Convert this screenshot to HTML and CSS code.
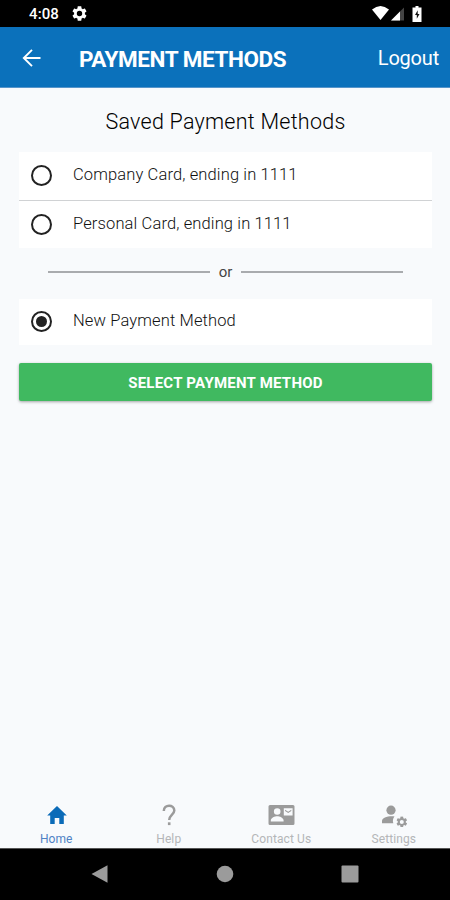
FILE: index.html
```html
<!DOCTYPE html>
<html lang="en">
<head>
<meta charset="utf-8">
<title>Payment Methods</title>
<link rel="stylesheet" href="styles.css">
</head>
<body>
<svg class="defs" width="0" height="0">
  <symbol id="gear" viewBox="2 2 20 20"><path fill-rule="evenodd" d="M19.14 12.94c.04-.3.06-.61.06-.94s-.02-.64-.07-.94l2.03-1.58c.18-.14.23-.41.12-.61l-1.92-3.32c-.12-.22-.37-.29-.59-.22l-2.39.96c-.5-.38-1.03-.7-1.62-.94l-.36-2.54c-.04-.24-.24-.41-.48-.41h-3.84c-.24 0-.43.17-.47.41l-.36 2.54c-.59.24-1.13.57-1.62.94l-2.39-.96c-.22-.08-.47 0-.59.22L2.74 8.87c-.12.21-.08.47.12.61l2.03 1.58c-.05.3-.09.63-.09.94s.02.64.07.94l-2.03 1.58c-.18.14-.23.41-.12.61l1.92 3.32c.12.22.37.29.59.22l2.39-.96c.5.38 1.03.7 1.62.94l.36 2.54c.05.24.24.41.48.41h3.84c.24 0 .44-.17.47-.41l.36-2.54c.59-.24 1.13-.56 1.62-.94l2.39.96c.22.08.47 0 .59-.22l1.92-3.32c.12-.22.07-.47-.12-.61zM12 15.6a3.6 3.6 0 1 1 0-7.2 3.6 3.6 0 0 1 0 7.2z"/></symbol>
</svg>
<div class="screen">
  <div class="status">
    <span class="time">4:08</span>
    <svg class="status-gear" width="15" height="15"><use href="#gear"/></svg>
    <svg class="status-icons" width="52" height="18" viewBox="0 0 52 18">
      <path fill="#fff" d="M0 4.500Q8.500-2.500 17 4.500L8.500 15Z"/>
      <path fill="#444" d="M19 15.500 32 2.500v13z"/>
      <path fill="#fff" d="M19 15.500 28 6.500v9z"/>
      <path fill="#fff" d="M43.500 1h3v1.500h3V17h-9V2.500h3z"/>
      <path fill="#111" d="M45.700 5.300 43 10h1.800v3.800l2.700-4.900h-1.800z"/>
    </svg>
  </div>
  <header class="appbar">
    <svg class="back" width="20" height="20" viewBox="0 0 20 20" fill="none" stroke="#fff" stroke-width="1.900"><path d="M18.500 10H2M10 1.800 1.800 10l8.200 8.200"/></svg>
    <h1>PAYMENT METHODS</h1>
    <a class="logout">Logout</a>
  </header>
  <main>
    <h2>Saved Payment Methods</h2>
    <div class="options">
      <label class="option"><span class="radio"></span><span class="name">Company Card, ending in 1111</span></label>
      <label class="option"><span class="radio"></span><span class="name">Personal Card, ending in 1111</span></label>
    </div>
    <div class="divider"><span>or</span></div>
    <div class="options">
      <label class="option"><span class="radio checked"></span><span class="name">New Payment Method</span></label>
    </div>
    <button class="submit">SELECT PAYMENT METHOD</button>
  </main>
  <nav class="tabs">
    <a class="tab active"><svg width="28" height="24" viewBox="0 0 28 24"><path d="M11.700 21v-6h4.600v6h4.500v-8.500h3L14 3 4.200 12.500h3V21z"/></svg><span>Home</span></a>
    <a class="tab"><svg width="28" height="24" viewBox="0 0 28 24"><path fill="none" stroke="currentColor" stroke-width="2.500" d="M8.800 8C8.800 1 19.300 1 19.300 7.500c0 3.800-5.100 4.500-5.100 9.500"/><path d="M12.900 19.300h2.600v2.800h-2.600z"/></svg><span>Help</span></a>
    <a class="tab"><svg width="28" height="24" viewBox="0 0 28 24"><path fill-rule="evenodd" d="M2 2h23a1.500 1.500 0 0 1 1.500 1.500v17A1.500 1.500 0 0 1 25 22H2a1.500 1.500 0 0 1-1.500-1.500v-17A1.500 1.500 0 0 1 2 2zM9.200 5.200a3.300 3.300 0 1 0 0 6.600 3.300 3.300 0 0 0 0-6.600zM2.800 18.500h12.800v-1.100c0-2.700-4.200-4.200-6.400-4.200s-6.400 1.500-6.400 4.200zM15.800 5.200v7.300h8.800V5.200zm1.300 1.500 3.100 2 3.100-2v1.200l-3.100 2-3.100-2z"/></svg><span>Contact Us</span></a>
    <a class="tab"><svg width="28" height="24" viewBox="0 0 28 24"><circle cx="11" cy="7.200" r="4.600"/><path d="M2 20.200v-2.200c0-3.500 6-5.200 12.500-4.600-1.600 2-2 4.300-1.200 6.800z"/><use href="#gear" x="16.200" y="13.300" width="11.200" height="11.200"/></svg><span>Settings</span></a>
  </nav>
  <footer class="sysnav">
    <svg width="18" height="20" viewBox="0 0 18 20"><path d="M.5 10 16.500 1.300v17.400z"/></svg>
    <svg width="18" height="20" viewBox="0 0 18 20"><circle cx="9" cy="10" r="8.300"/></svg>
    <svg width="18" height="20" viewBox="0 0 18 20"><rect x=".5" y="1.500" width="17" height="17" rx="1"/></svg>
  </footer>
</div>
</body>
</html>
```
FILE: styles.css
```css
* { box-sizing: border-box; }
body { margin: 0; font-family: Roboto, sans-serif; }
.defs { display: block; }
.screen { width: 450px; height: 900px; display: flex; flex-direction: column; background: #f8fafc; }
.status { height: 27px; background: #000; display: flex; align-items: center; padding: 1px 26px 0 29px; color: #fff; }
.time { font-size: 15px; font-weight: 500; width: 43px; letter-spacing: .1px; }
.status-gear { fill: #fff; margin-top: -1px; }
.status-icons { margin-left: auto; }
.appbar { height: 61px; background: #0b71bb; border-bottom: 1px solid #5795ca; display: flex; align-items: center; padding: 2px 11px 0 22px; color: #fff; }
.back { margin-right: 37px; }
h1 { margin: 0; font-size: 22.500px; font-weight: 700; white-space: nowrap; letter-spacing: -.42px; padding-top: 1px; }
.logout { margin-left: auto; font-size: 20px; white-space: nowrap; letter-spacing: -.2px; }
main { flex: 1; padding: 0 18px 0 19px; }
h2 { margin: 0; height: 64px; line-height: 67px; text-align: center; font-size: 21.500px; font-weight: 300; color: #000; letter-spacing: .25px; }
.options { background: #fff; }
.option { display: flex; align-items: center; height: 48px; padding-left: 12px; }
.options .option:first-child { padding-bottom: 1px; }
.option + .option { border-top: 1px solid #d0d2d4; }
.radio { width: 21px; height: 21px; border: 2px solid #222; border-radius: 50%; margin-right: 21px; display: grid; place-items: center; }
.radio.checked::after { content: ""; width: 11px; height: 11px; border-radius: 50%; background: #222; }
.name { font-size: 16.500px; font-weight: 300; letter-spacing: .13px; color: #111; white-space: nowrap; padding-bottom: 3px; }
.divider { display: flex; align-items: center; height: 51px; padding: 0 29px 3px; gap: 9px; font-size: 15px; color: #444; }
.divider::before, .divider::after { content: ""; flex: 1; height: 2px; background: #a9abae; }
.divider + .options .option { height: 46px; }
.submit { display: block; width: 100%; height: 38px; margin-top: 18px; border: 0; border-radius: 2px; background: #40b960; color: #fff; font: 700 15px Roboto, sans-serif; letter-spacing: .24px; padding: 1px 0 0; box-shadow: 0 1px 3px rgba(0,0,0,.35); }
.tabs { height: 46px; display: flex; padding: 1px 0 0; }
.tab { flex: 1; display: flex; flex-direction: column; align-items: center; color: #9b9b9b; font-size: 12px; line-height: 14px; letter-spacing: .1px; }
.tab svg { fill: currentColor; margin-bottom: 5px; position: relative; left: .5px; }
.tab span { color: #b4b6b8; }
.tab.active { color: #0b6bb8; }
.tab.active span { color: #4f82c5; }
.sysnav { height: 52px; background: #000; border-top: 1px solid #555; display: flex; justify-content: space-between; align-items: center; padding: 0 91px 2px; fill: #9b9b9b; }
```
